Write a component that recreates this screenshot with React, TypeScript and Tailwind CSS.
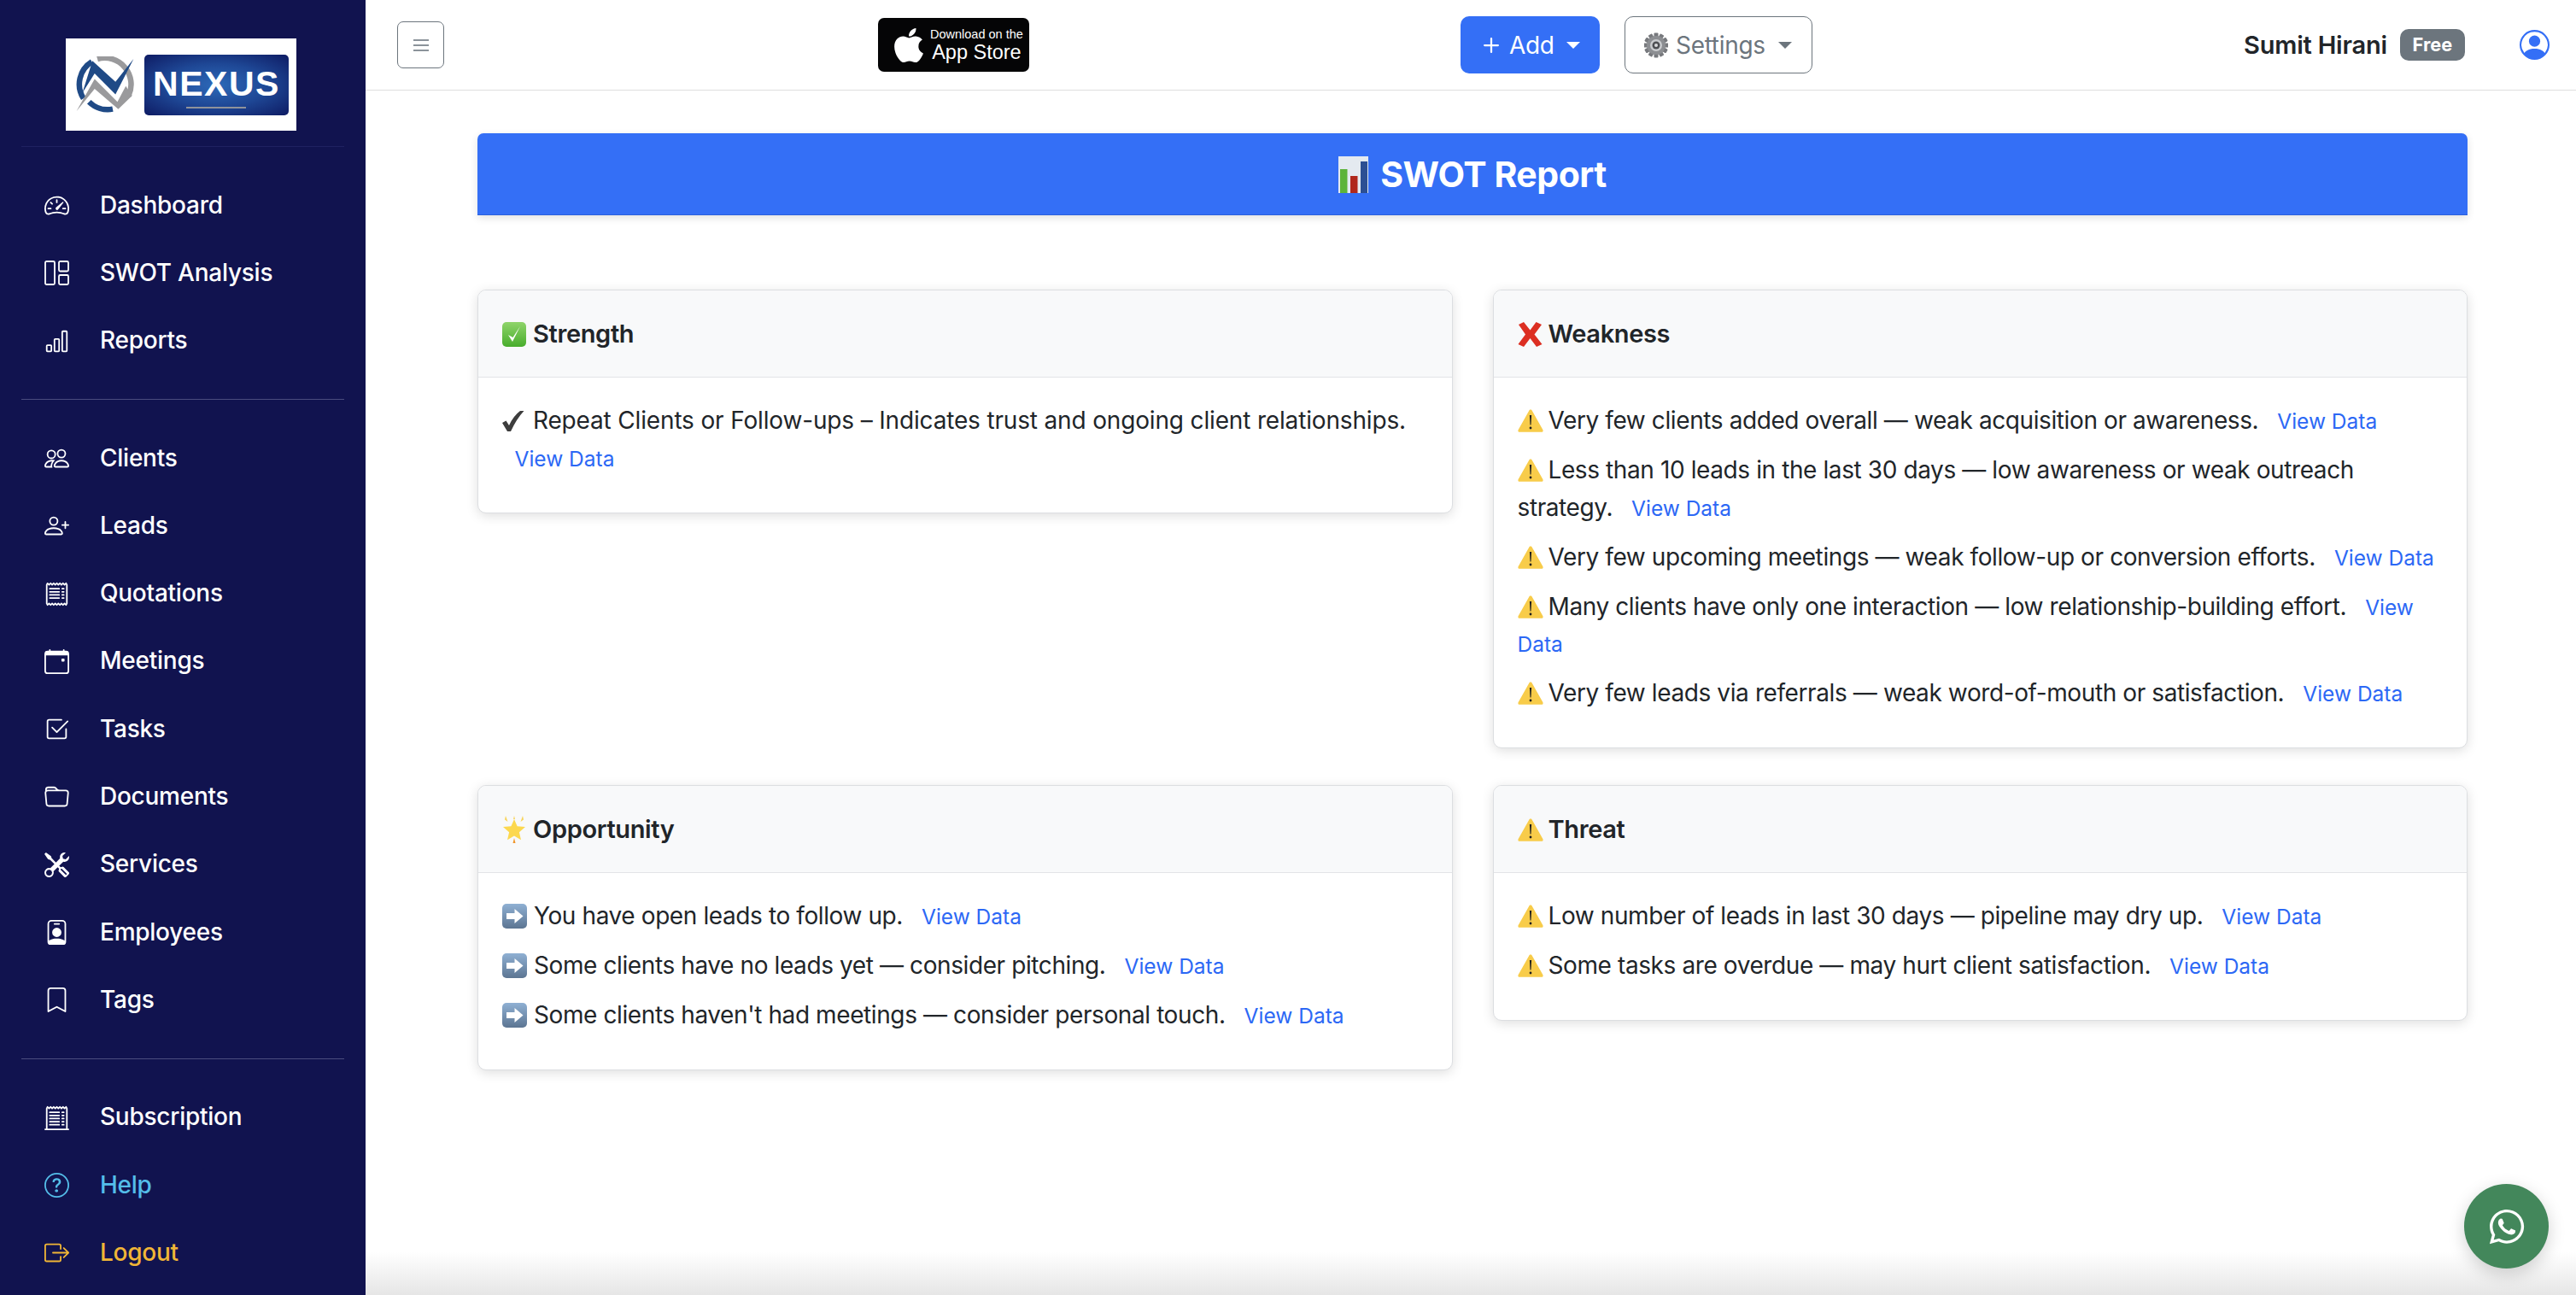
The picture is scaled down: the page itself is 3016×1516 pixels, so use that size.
import React from "react";
import { FaApple, FaWhatsapp } from "react-icons/fa";
import {
  BsSpeedometer2, BsBarChart, BsPeople, BsPersonPlus, BsReceipt, BsCalendarEvent, BsCheck2Square,
  BsFolder, BsTools, BsPersonBadge, BsBookmark, BsReceiptCutoff, BsQuestionCircle, BsBoxArrowRight, BsPersonCircle, BsPlus,
} from "react-icons/bs";

const SwotIcon = ({ size = 29 }: { size?: number }) => (
  <svg width={size} height={size} viewBox="0 0 29 29" fill="none" stroke="currentColor" strokeWidth="1.8">
    <rect x="1" y="1" width="11" height="27" rx="1.5" />
    <rect x="17" y="1" width="11" height="11.5" rx="1.5" />
    <rect x="17" y="17" width="11" height="11" rx="1.5" />
  </svg>
);

const CheckEmoji = () => (
  <svg className="inline-block align-[-5px] mr-[8px]" width="28" height="29" viewBox="0 0 28 29">
    <defs>
      <linearGradient id="gc" x1="0" y1="0" x2="0" y2="1"><stop offset="0" stopColor="#8fd46a" /><stop offset="1" stopColor="#48ad2c" /></linearGradient>
    </defs>
    <rect width="28" height="29" rx="5" fill="url(#gc)" />
    <path d="M7 15l5 8 9-18-8.500 13z" fill="#fff" />
  </svg>
);

const CrossEmoji = () => (
  <svg className="inline-block align-[-5px] mr-[7px]" width="29" height="29" viewBox="0 0 29 29">
    <path d="M1 3l6-3 7.500 9.500L21.500 0 28 3l-8.500 11.500L28.500 26 22 29l-7.500-10L7 29l-6.500-3L9 14.500z" fill="#dc2f22" />
  </svg>
);

const WarnEmoji = () => (
  <svg className="inline-block align-[-4px] mr-[6px]" width="30" height="27" viewBox="0 0 30 27">
    <path d="M15 0.500c.8 0 1.400.5 1.900 1.400l12.400 22.200c.7 1.300.1 2.700-1.400 2.700H2.100C.6 26.800 0 25.400.7 24.100L13.100 1.900c.5-.9 1.100-1.400 1.900-1.400z" fill="#f8cc4a" />
    <path d="M13.900 7h2.200l-.6 11.500h-1z" fill="#1e1e1e" />
    <circle cx="15" cy="22" r="1.400" fill="#1e1e1e" />
  </svg>
);

const ArrowEmoji = () => (
  <svg className="inline-block align-[-5px] mr-[8px]" width="29" height="29" viewBox="0 0 29 29">
    <defs>
      <linearGradient id="ga" x1="0" y1="0" x2="0" y2="1"><stop offset="0" stopColor="#8fb0d3" /><stop offset="1" stopColor="#5c7592" /></linearGradient>
    </defs>
    <rect width="29" height="29" rx="5" fill="url(#ga)" />
    <path d="M5 11h9.500V6l10 8.500-10 8.500v-5H5z" fill="#fff" />
  </svg>
);

const StarEmoji = () => (
  <svg className="inline-block align-[-6px] mr-[8px]" width="28" height="32" viewBox="0 0 28 32">
    <path d="M14 4l3.600 8.300 9.400.8-7.100 6.100 2.100 9.100L14 23.500 6 28.300l2.100-9.100L1 13.100l9.400-.8z" fill="#fcd84f" />
    <path d="M4 0l2.500 7-3.500-2.500zM24 0l-2.500 7 3.500-2.500zM14 0l1 4h-2z" fill="#f8d45a" />
    <path d="M14 26l1.500 6h-3z" fill="#f0962a" />
  </svg>
);

const ChartEmoji = () => (
  <svg className="inline-block align-[-7px] mr-[14px]" width="35" height="43" viewBox="0 0 35 43">
    <rect width="35" height="43" fill="#e4eaf0" />
    <rect x="2" y="15" width="8.500" height="28" fill="#5cb43a" />
    <rect x="14" y="23" width="8.500" height="20" fill="#b0281c" />
    <rect x="26" y="6" width="8" height="37" fill="#2c4f93" />
  </svg>
);

const GearEmoji = () => {
  const teeth = [0, 30, 60, 90, 120, 150];
  return (
    <svg className="inline-block mr-[9px]" width="28" height="30" viewBox="0 0 28 30">
      {teeth.map((a) => (
        <rect key={a} x="11.500" y="0.500" width="5" height="29" rx="1" fill="#77797d" transform={`rotate(${a} 14 15)`} />
      ))}
      <circle cx="14" cy="15" r="11" fill="#8c8e92" />
      <circle cx="14" cy="15" r="7" fill="#c9cbce" />
      <circle cx="14" cy="15" r="4.500" fill="#4d4f53" />
      <circle cx="14" cy="15" r="2" fill="#d9dadc" />
    </svg>
  );
};

const HeavyCheck = () => (
  <svg className="inline-block align-[-3px] mr-[10px]" width="26" height="24" viewBox="0 0 26 24">
    <path d="M0 14 L4.500 11.500 L8 17 Q13 6 21 0 L25.500 0 Q17 9 10 24 L6 24 Z" fill="#3d3d3d" />
  </svg>
);

const Logo = () => (
  <div className="ml-[77px] flex h-[108px] w-[270px] items-center bg-white pl-[11px]">
    <svg width="70" height="66" viewBox="80 100 215 200" className="shrink-0">
      <path d="M110 250 A95 95 0 0 1 140 118" fill="none" stroke="#1f4a86" strokeWidth="20" />
      <path d="M160 108 A95 95 0 0 1 272 240" fill="none" stroke="#9a9a9c" strokeWidth="20" />
      <path d="M130 262 A95 95 0 0 0 215 288" fill="none" stroke="#1f4a86" strokeWidth="20" />
      <path d="M85 295 L150 180 L232 262 L262 205 L285 240 L235 288 L150 215 Z" fill="#9a9a9c" />
      <path d="M106 230 L142 115 L225 190 L290 108 L225 235 L150 160 Z" fill="#1f4a86" />
    </svg>
    <div className="relative ml-[11px] flex h-[71px] w-[169px] shrink-0 items-start justify-center rounded-[5px] bg-[radial-gradient(ellipse_at_center,#2d69b8_0%,#1e4795_50%,#0e1b63_100%)] pt-[9px]">
      <span className="font-['Liberation_Sans',sans-serif] text-[41px] font-bold leading-[50px] tracking-[1.5px] text-white">NEXUS</span>
      <div className="absolute bottom-[8px] left-[49px] h-[2px] w-[70px] bg-[#8f939b]" />
    </div>
  </div>
);

type Item = { label: string; icon: React.ReactNode };

const ICON = 29;
const group1: Item[] = [
  { label: "Dashboard", icon: <BsSpeedometer2 size={ICON} /> },
  { label: "SWOT Analysis", icon: <SwotIcon /> },
  { label: "Reports", icon: <BsBarChart size={ICON} /> },
];
const group2: Item[] = [
  { label: "Clients", icon: <BsPeople size={ICON} /> },
  { label: "Leads", icon: <BsPersonPlus size={ICON} /> },
  { label: "Quotations", icon: <BsReceipt size={ICON} /> },
  { label: "Meetings", icon: <BsCalendarEvent size={ICON} /> },
  { label: "Tasks", icon: <BsCheck2Square size={ICON} /> },
  { label: "Documents", icon: <BsFolder size={ICON} /> },
  { label: "Services", icon: <BsTools size={ICON} /> },
  { label: "Employees", icon: <BsPersonBadge size={ICON} /> },
  { label: "Tags", icon: <BsBookmark size={ICON} /> },
];

const NavRow = ({ label, icon, cls = "text-white" }: { label: string; icon: React.ReactNode; cls?: string }) => (
  <div className={`flex h-[79.3px] items-center pl-[52px] text-[28px] font-medium leading-[44px] tracking-[-0.25px] ${cls}`}>
    <span className="flex w-[65px] shrink-0 items-center">{icon}</span>
    <span className="-translate-y-[1px]">{label}</span>
  </div>
);

const Caret = ({ cls }: { cls: string }) => (
  <span className={`inline-block h-0 w-0 border-x-[8px] border-t-[8px] border-x-transparent ${cls}`} />
);

const Link = () => <a className="ml-[14.500px] text-[24.500px] leading-none tracking-normal text-[#2c68f5]">View Data</a>;

const Row = ({ icon, text, cls = "tracking-[-0.4px]" }: { icon: React.ReactNode; text: string; cls?: string }) => (
  <div className={`mb-[14.500px] text-[28px] leading-[43.500px] text-[#212529] ${cls}`}>
    {icon}
    {text} <Link />
  </div>
);

const Card = ({ title, icon, children }: { title: string; icon: React.ReactNode; children: React.ReactNode }) => (
  <div className="overflow-hidden rounded-[10px] border border-[#dcdee1] bg-white shadow-[0_3px_14px_rgba(0,0,0,0.13)]">
    <div className="flex h-[102px] items-center border-b border-[#e2e4e7] bg-[#f8f9fa] px-[28px]">
      <div className="text-[29px] font-semibold leading-[44px] tracking-[-0.35px] text-[#212529]">
        {icon}
        {title}
      </div>
    </div>
    <div className="px-[28px] pb-[27px] pt-[29px]">{children}</div>
  </div>
);

export default function App() {
  return (
    <div className="relative flex h-[1516px] w-[3016px] overflow-hidden bg-white font-['Inter',sans-serif]">
      <aside className="flex w-[428px] shrink-0 flex-col bg-[#11134f] pt-[45px]">
        <Logo />
        <div className="mx-[25px] mb-[29px] mt-[18px] border-t border-[#1f2160]" />
        {group1.map((i) => <NavRow key={i.label} label={i.label} icon={i.icon} />)}
        <div className="mx-[25px] my-[28.500px] border-t border-[#4a4c7e]" />
        {group2.map((i) => <NavRow key={i.label} label={i.label} icon={i.icon} />)}
        <div className="mx-[25px] my-[28.500px] border-t border-[#4a4c7e]" />
        <NavRow label="Subscription" icon={<BsReceiptCutoff size={ICON} />} />
        <NavRow label="Help" icon={<BsQuestionCircle size={ICON} />} cls="text-[#54bde9]" />
        <NavRow label="Logout" icon={<BsBoxArrowRight size={ICON} />} cls="text-[#f1b636]" />
      </aside>

      <main className="flex min-w-0 flex-1 flex-col">
        <header className="flex h-[106px] shrink-0 items-center border-b border-[#dfdfdf] bg-white">
          <button className="ml-[37px] flex h-[55px] w-[55px] items-center justify-center rounded-[7px] border border-[#6c757d]">
            <span className="flex w-[18px] flex-col gap-[4px]">
              <span className="h-[2px] bg-[#8b939a]" />
              <span className="h-[2px] bg-[#8b939a]" />
              <span className="h-[2px] bg-[#8b939a]" />
            </span>
          </button>

          <div className="ml-[508px] flex h-[63px] w-[177px] items-center rounded-[7px] bg-[#050506] pl-[13px] text-white">
            <FaApple size={46} className="shrink-0" />
            <div className="ml-[2px] flex flex-col items-center whitespace-nowrap font-['Liberation_Sans',sans-serif]">
              <span className="text-[14.500px] leading-[17px]">Download on the</span>
              <span className="text-[23.500px] leading-[24px]">App Store</span>
            </div>
          </div>

          <button className="ml-[505px] flex h-[67px] w-[163px] items-center rounded-[10px] bg-[#346ff6] pl-[20px] text-[28px] tracking-[-0.3px] text-white">
            <BsPlus size={36} className="-ml-[2px] mr-[3px]" />
            Add
            <Caret cls="ml-[14px] border-t-white" />
          </button>

          <button className="ml-[29px] flex h-[67px] w-[220px] items-center rounded-[10px] border border-[#6c757d] pl-[22px] text-[28px] tracking-[-0.3px] text-[#6c757d]">
            <GearEmoji />
            Settings
            <Caret cls="ml-[15px] border-t-[#6c757d]" />
          </button>

          <span className="ml-[505px] text-[29px] font-semibold tracking-[-0.2px] text-[#212529]">Sumit Hirani</span>
          <span className="ml-[15px] flex h-[37px] w-[76px] items-center justify-center rounded-[10px] bg-[#6c757d] text-[21.750px] font-bold text-white">Free</span>
          <BsPersonCircle size={35} className="ml-[64px] text-[#346ff6]" />
        </header>

        <div className="flex flex-1 flex-col pl-[131px] pr-[127px] pt-[50px]">
          <div className="flex h-[96px] shrink-0 items-center justify-center rounded-t-[7px] border-b border-[#2b60dc] bg-[#346ff6] shadow-[0_3px_10px_rgba(0,0,0,0.12)]">
            <h1 className="text-[41px] font-bold leading-[50px] tracking-[-0.5px] text-white">
              <ChartEmoji />
              SWOT Report
            </h1>
          </div>

          <div className="mt-[87px] grid grid-cols-2 items-start gap-x-[47px] gap-y-[43px]">
            <Card title="Strength" icon={<CheckEmoji />}>
              <Row icon={<HeavyCheck />} cls="tracking-[-0.16px]" text="Repeat Clients or Follow-ups – Indicates trust and ongoing client relationships." />
            </Card>

            <Card title="Weakness" icon={<CrossEmoji />}>
              <Row icon={<WarnEmoji />} text="Very few clients added overall — weak acquisition or awareness." />
              <Row icon={<WarnEmoji />} text="Less than 10 leads in the last 30 days — low awareness or weak outreach strategy." />
              <Row icon={<WarnEmoji />} text="Very few upcoming meetings — weak follow-up or conversion efforts." />
              <Row icon={<WarnEmoji />} text="Many clients have only one interaction — low relationship-building effort." />
              <Row icon={<WarnEmoji />} text="Very few leads via referrals — weak word-of-mouth or satisfaction." />
            </Card>

            <Card title="Opportunity" icon={<StarEmoji />}>
              <Row icon={<ArrowEmoji />} text="You have open leads to follow up." />
              <Row icon={<ArrowEmoji />} text="Some clients have no leads yet — consider pitching." />
              <Row icon={<ArrowEmoji />} text="Some clients haven't had meetings — consider personal touch." />
            </Card>

            <Card title="Threat" icon={<WarnEmoji />}>
              <Row icon={<WarnEmoji />} text="Low number of leads in last 30 days — pipeline may dry up." />
              <Row icon={<WarnEmoji />} text="Some tasks are overdue — may hurt client satisfaction." />
            </Card>
          </div>
        </div>
      </main>

      <div className="pointer-events-none absolute bottom-0 left-[428px] right-0 h-[50px] bg-gradient-to-t from-[#e6e6e6] to-transparent" />
      <div className="absolute bottom-[31px] right-[32px] flex h-[99px] w-[99px] items-center justify-center rounded-full bg-[#43875b] text-white shadow-[0_6px_20px_rgba(0,0,0,0.18)]">
        <FaWhatsapp size={46} />
      </div>
    </div>
  );
}
